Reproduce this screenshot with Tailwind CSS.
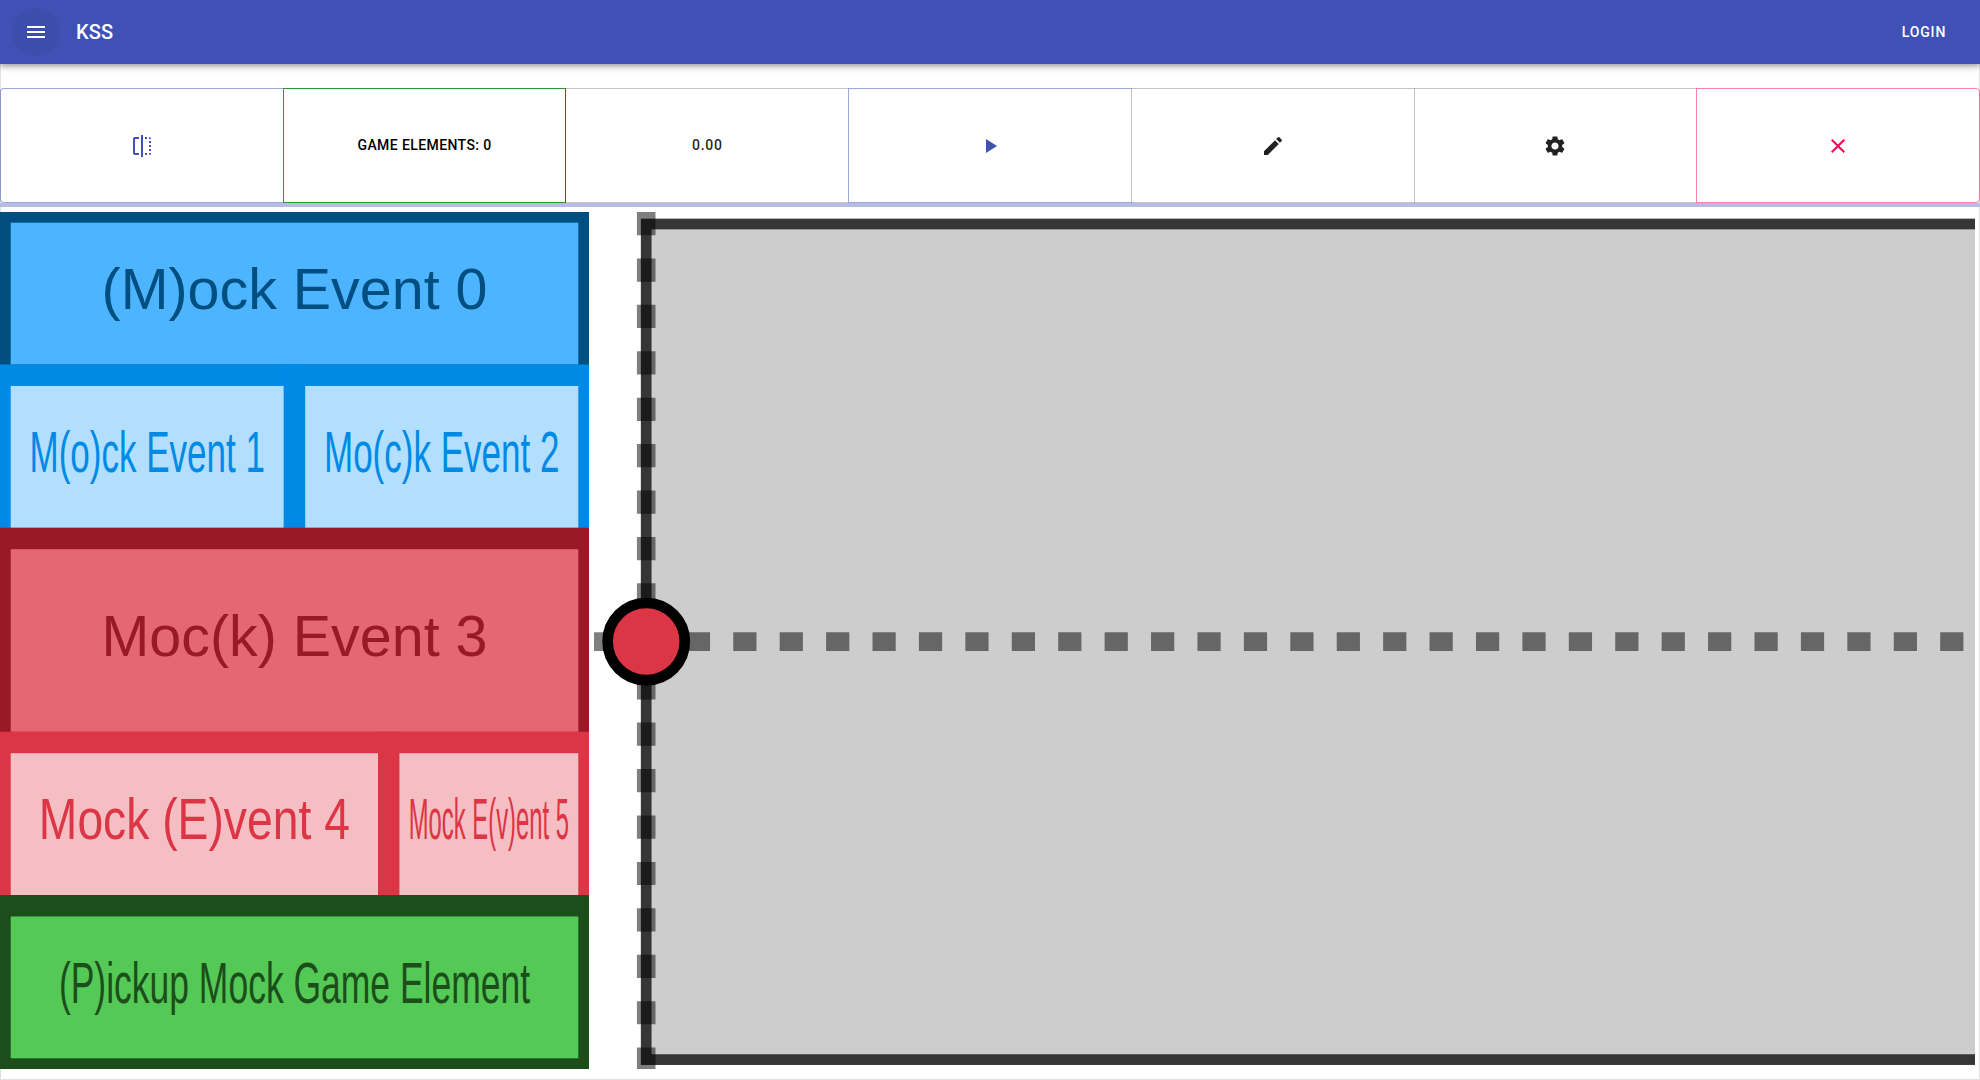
<!DOCTYPE html>
<html lang="en">
<head>
<meta charset="utf-8">
<title>KSS</title>
<script src="https://cdn.jsdelivr.net/npm/@tailwindcss/browser@4"></script>
</head>
<body class="h-screen overflow-hidden bg-white font-['Roboto',sans-serif] text-black/87">
<div class="flex h-full flex-col">
  <header class="relative z-10 flex h-16 shrink-0 items-center bg-[#3f51b5] pl-3 pr-6 text-white shadow-[0_2px_4px_-1px_rgba(0,0,0,0.2),0_4px_5px_0_rgba(0,0,0,0.14),0_1px_10px_0_rgba(0,0,0,0.12)]">
    <button class="mr-4 flex size-12 items-center justify-center rounded-full bg-black/4" aria-label="menu">
      <svg class="size-6 fill-current" viewBox="0 0 24 24"><path d="M3 18h18v-2H3v2zm0-5h18v-2H3v2zm0-7v2h18V6H3z"/></svg>
    </button>
    <h6 class="grow text-xl leading-8 font-medium tracking-[0.0075em]">KSS</h6>
    <button class="min-w-16 text-center text-sm leading-[24.5px] font-medium tracking-[0.06em]">LOGIN</button>
  </header>

  <main class="flex grow flex-col border-x border-b border-[#e0e0e0] pt-6">
    <div class="-mx-px flex h-[115px] shrink-0 text-sm leading-[24.5px] font-medium tracking-[0.02857em] *:flex *:flex-1 *:items-center *:justify-center *:border">
      <button class="rounded-l border-[#3f51b5]/50 border-r-transparent text-[#3f51b5]" aria-label="flip">
        <svg class="size-6 fill-current" viewBox="0 0 24 24"><path d="M15 21h2v-2h-2v2zm4-12h2V7h-2v2zM3 5v14c0 1.1.9 2 2 2h4v-2H5V5h4V3H5c-1.1 0-2 .9-2 2zm16-2v2h2c0-1.1-.9-2-2-2zm-8 20h2V1h-2v22zm8-6h2v-2h-2v2zM15 5h2V3h-2v2zm4 8h2v-2h-2v2zm0 8c1.1 0 2-.9 2-2h-2v2z"/></svg>
      </button>
      <button class="-ml-px border-[#2a9a2c] text-black">GAME ELEMENTS: 0</button>
      <button class="-ml-px border-black/23 border-r-transparent tracking-[0.05em]">0.00</button>
      <button class="-ml-px border-[#3f51b5]/50 border-r-transparent text-[#3f51b5]" aria-label="play">
        <svg class="size-6 fill-current" viewBox="0 0 24 24"><path d="M8 5v14l11-7z"/></svg>
      </button>
      <button class="-ml-px border-black/23 border-r-transparent" aria-label="edit">
        <svg class="size-6 fill-current" viewBox="0 0 24 24"><path d="M3 17.25V21h3.75L17.81 9.94l-3.75-3.75L3 17.25zM20.71 7.04c.39-.39.39-1.02 0-1.41l-2.34-2.34a.9959.9959 0 00-1.41 0l-1.83 1.83 3.75 3.75 1.83-1.83z"/></svg>
      </button>
      <button class="-ml-px border-black/23 border-r-transparent" aria-label="settings">
        <svg class="size-6 fill-current" viewBox="0 0 24 24"><path d="M19.14 12.94c.04-.3.06-.61.06-.94 0-.32-.02-.64-.07-.94l2.03-1.58c.18-.14.23-.41.12-.61l-1.92-3.32c-.12-.22-.37-.29-.59-.22l-2.39.96c-.5-.38-1.03-.7-1.62-.94l-.36-2.54c-.04-.24-.24-.41-.48-.41h-3.84c-.24 0-.43.17-.47.41l-.36 2.54c-.59.24-1.13.57-1.62.94l-2.39-.96c-.22-.08-.47 0-.59.22L2.74 8.87c-.12.21-.08.47.12.61l2.03 1.58c-.05.3-.09.63-.09.94s.02.64.07.94l-2.03 1.58c-.18.14-.23.41-.12.61l1.92 3.32c.12.22.37.29.59.22l2.39-.96c.5.38 1.03.7 1.62.94l.36 2.54c.05.24.24.41.48.41h3.84c.24 0 .44-.17.47-.41l.36-2.54c.59-.24 1.13-.56 1.62-.94l2.39.96c.22.08.47 0 .59-.22l1.92-3.32c.12-.22.07-.47-.12-.61l-2.01-1.58zM12 15.6c-1.98 0-3.6-1.62-3.6-3.6s1.62-3.6 3.6-3.6 3.6 1.62 3.6 3.6-1.62 3.6-3.6 3.6z"/></svg>
      </button>
      <button class="-ml-px rounded-r border-[#f50057]/50 text-[#f50057]" aria-label="close">
        <svg class="size-6 fill-current" viewBox="0 0 24 24"><path d="M19 6.41L17.59 5 12 10.59 6.41 5 5 6.41 10.59 12 5 17.59 6.41 19 12 13.41 17.59 19 19 17.59 13.41 12z"/></svg>
      </button>
    </div>
    <div class="-mx-px h-1 shrink-0 bg-[#b6bce2]"></div>

    <div class="-ml-px mt-[5px] flex h-[857px] gap-[5px]">
      <!-- Event buttons -->
      <svg class="h-full w-[589px] shrink-0" viewBox="0 0 589 857" font-family="'Liberation Sans', Arial, sans-serif" font-size="57.4" text-anchor="middle" dominant-baseline="middle">
        <g stroke-width="21.4">
          <rect width="589" height="163.24" fill="#4db5ff" stroke="#004f80"/>
          <text x="294.5" y="81.62" fill="#004f80">(M)ock Event 0</text>
          <g fill="#b3dfff" stroke="#008ae6">
            <rect y="163.24" width="294.5" height="163.24"/>
            <rect x="294.5" y="163.24" width="294.5" height="163.24"/>
          </g>
          <rect y="326.48" width="589" height="204.04" fill="#e56773" stroke="#991a26"/>
          <g fill="#f4bec3" stroke="#dc3545">
            <rect y="530.52" width="388.74" height="163.24"/>
            <rect x="388.74" y="530.52" width="200.26" height="163.24"/>
          </g>
          <rect y="693.76" width="589" height="163.24" fill="#55c955" stroke="#1b4e1b"/>
        </g>
        <g fill="#008ae6">
          <text x="147.25" y="244.86" textLength="235.6" lengthAdjust="spacingAndGlyphs">M(o)ck Event 1</text>
          <text x="441.75" y="244.86" textLength="235.6" lengthAdjust="spacingAndGlyphs">Mo(c)k Event 2</text>
        </g>
        <text x="294.5" y="428.5" fill="#991a26">Moc(k) Event 3</text>
        <g fill="#dc3545">
          <text x="194.37" y="612.14" textLength="311" lengthAdjust="spacingAndGlyphs">Mock (E)vent 4</text>
          <text x="488.87" y="612.14" textLength="160.2" lengthAdjust="spacingAndGlyphs">Mock E(v)ent 5</text>
        </g>
        <text x="294.5" y="775.38" textLength="471.2" lengthAdjust="spacingAndGlyphs" fill="#1b4e1b">(P)ickup Mock Game Element</text>
      </svg>

      <!-- Playing field -->
      <svg class="h-full w-[1381px] shrink-0" viewBox="0 0 1381 857">
        <rect x="52.2" y="12" width="1500" height="835.6" fill="#cdcdcd" stroke="#363636" stroke-width="10.7"/>
        <g stroke="#000" stroke-opacity="0.5" stroke-width="18.57" stroke-dasharray="23.21">
          <path d="M52.2 0V857"/>
          <path d="M0 429.6H1381"/>
        </g>
        <circle cx="52.2" cy="429.6" r="38.6" fill="#dc3545" stroke="#000" stroke-width="10.7"/>
      </svg>
    </div>
  </main>
</div>
</body>
</html>
